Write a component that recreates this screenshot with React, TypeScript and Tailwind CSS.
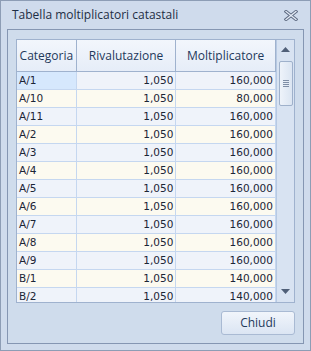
import React from 'react';

interface Riga {
  categoria: string;
  rivalutazione: string;
  moltiplicatore: string;
}

const righe: Riga[] = [
  { categoria: 'A/1', rivalutazione: '1,050', moltiplicatore: '160,000' },
  { categoria: 'A/10', rivalutazione: '1,050', moltiplicatore: '80,000' },
  { categoria: 'A/11', rivalutazione: '1,050', moltiplicatore: '160,000' },
  { categoria: 'A/2', rivalutazione: '1,050', moltiplicatore: '160,000' },
  { categoria: 'A/3', rivalutazione: '1,050', moltiplicatore: '160,000' },
  { categoria: 'A/4', rivalutazione: '1,050', moltiplicatore: '160,000' },
  { categoria: 'A/5', rivalutazione: '1,050', moltiplicatore: '160,000' },
  { categoria: 'A/6', rivalutazione: '1,050', moltiplicatore: '160,000' },
  { categoria: 'A/7', rivalutazione: '1,050', moltiplicatore: '160,000' },
  { categoria: 'A/8', rivalutazione: '1,050', moltiplicatore: '160,000' },
  { categoria: 'A/9', rivalutazione: '1,050', moltiplicatore: '160,000' },
  { categoria: 'B/1', rivalutazione: '1,050', moltiplicatore: '140,000' },
  { categoria: 'B/2', rivalutazione: '1,050', moltiplicatore: '140,000' },
];

// icona di chiusura "X" contornata
const CloseIcon = () => (
  <svg width="14" height="11" viewBox="0 0 14 11">
    <path d="M2 1.5 L12 9.5 M12 1.5 L2 9.5" stroke="#5d6a82" strokeWidth="3.2" strokeLinecap="square" />
    <path d="M2 1.5 L12 9.5 M12 1.5 L2 9.5" stroke="#e4ebf5" strokeWidth="1.3" strokeLinecap="square" />
  </svg>
);

const ScrollBar = () => (
  <div className="w-[18px] flex flex-col items-center bg-[#d8e3f2] border-l border-[#b7c9e2]">
    <div className="h-[18px] w-full flex items-center justify-center">
      <svg width="9" height="5" viewBox="0 0 9 5"><path d="M0 5 L4.5 0 L9 5 Z" fill="#4f5f78" /></svg>
    </div>
    <div className="mt-[3px] w-[14px] h-[45px] rounded-[2px] border border-[#9fb1cb] bg-gradient-to-r from-[#eef3fa] to-[#dbe5f2] flex flex-col items-center justify-center gap-[1px]">
      <div className="w-[6px] h-px bg-[#7f8ea6]" />
      <div className="w-[6px] h-px bg-[#7f8ea6]" />
      <div className="w-[6px] h-px bg-[#7f8ea6]" />
      <div className="w-[6px] h-px bg-[#7f8ea6]" />
    </div>
    <div className="flex-1" />
    <div className="h-[16px] w-full flex items-start justify-center pt-[3px]">
      <svg width="9" height="5" viewBox="0 0 9 5"><path d="M0 0 L4.5 5 L9 0 Z" fill="#4f5f78" /></svg>
    </div>
  </div>
);

export default function App() {
  return (
    <div className="w-[311px] h-[351px] bg-[#cfdbec] border border-[#8d9db5] flex flex-col" style={{ fontFamily: '"Open Sans", "Noto Sans", sans-serif' }}>
      <div className="h-[28px] flex items-center justify-between pl-[11px] pr-[12px] shrink-0">
        <span className="text-[12px] text-[#1e2e44] leading-none">Tabella moltiplicatori catastali</span>
        <CloseIcon />
      </div>

      <div className="flex-1 mx-[6px] mb-[6px] border border-[#8596b2] bg-[#cfdcec] pt-[9px] px-[8px] pb-[8px] flex flex-col">
        <div className="h-[264px] border border-[#9fb2ce] bg-[#eef3fb] flex overflow-hidden">
          <div className="flex-1 flex flex-col overflow-hidden">
            <div className="h-[32px] flex shrink-0 border-b border-[#9fb2ce] bg-gradient-to-b from-[#f2f6fc] to-[#e6edf8] text-[12px] text-[#1e395b]">
              <div className="w-[60px] flex items-center justify-center border-r border-[#9fb2ce]">Categoria</div>
              <div className="w-[100px] flex items-center justify-center border-r border-[#9fb2ce]">Rivalutazione</div>
              <div className="w-[100px] flex items-center justify-center border-r border-[#9fb2ce]">Moltiplicatore</div>
            </div>
            {righe.map((r, i) => (
              <div
                key={r.categoria}
                className={`h-[18px] shrink-0 flex border-b border-[#c5d7f0] text-[11px] text-[#1b2536] ${i % 2 === 1 ? 'bg-[#fcfaf0]' : 'bg-[#eff3fa]'}`}
                style={{ fontFamily: '"DejaVu Sans", sans-serif', fontSize: '10.5px' }}
              >
                <div className={`w-[60px] flex items-center pl-[2px] border-r border-[#c5d7f0] ${i === 0 ? 'bg-[#d6e8fd]' : ''}`}>{r.categoria}</div>
                <div className="w-[100px] flex items-center justify-end pr-[2px] border-r border-[#c5d7f0]">{r.rivalutazione}</div>
                <div className="w-[100px] flex items-center justify-end pr-[2px] border-r border-[#c5d7f0]">{r.moltiplicatore}</div>
              </div>
            ))}
          </div>
          <ScrollBar />
        </div>

        <div className="flex-1 flex items-end justify-end">
          <button className="w-[74px] h-[24px] rounded-[3px] border border-[#a9bad3] bg-gradient-to-b from-[#f1f5fb] to-[#dbe5f3] text-[12px] text-[#1e395b]">
            Chiudi
          </button>
        </div>
      </div>
    </div>
  );
}
